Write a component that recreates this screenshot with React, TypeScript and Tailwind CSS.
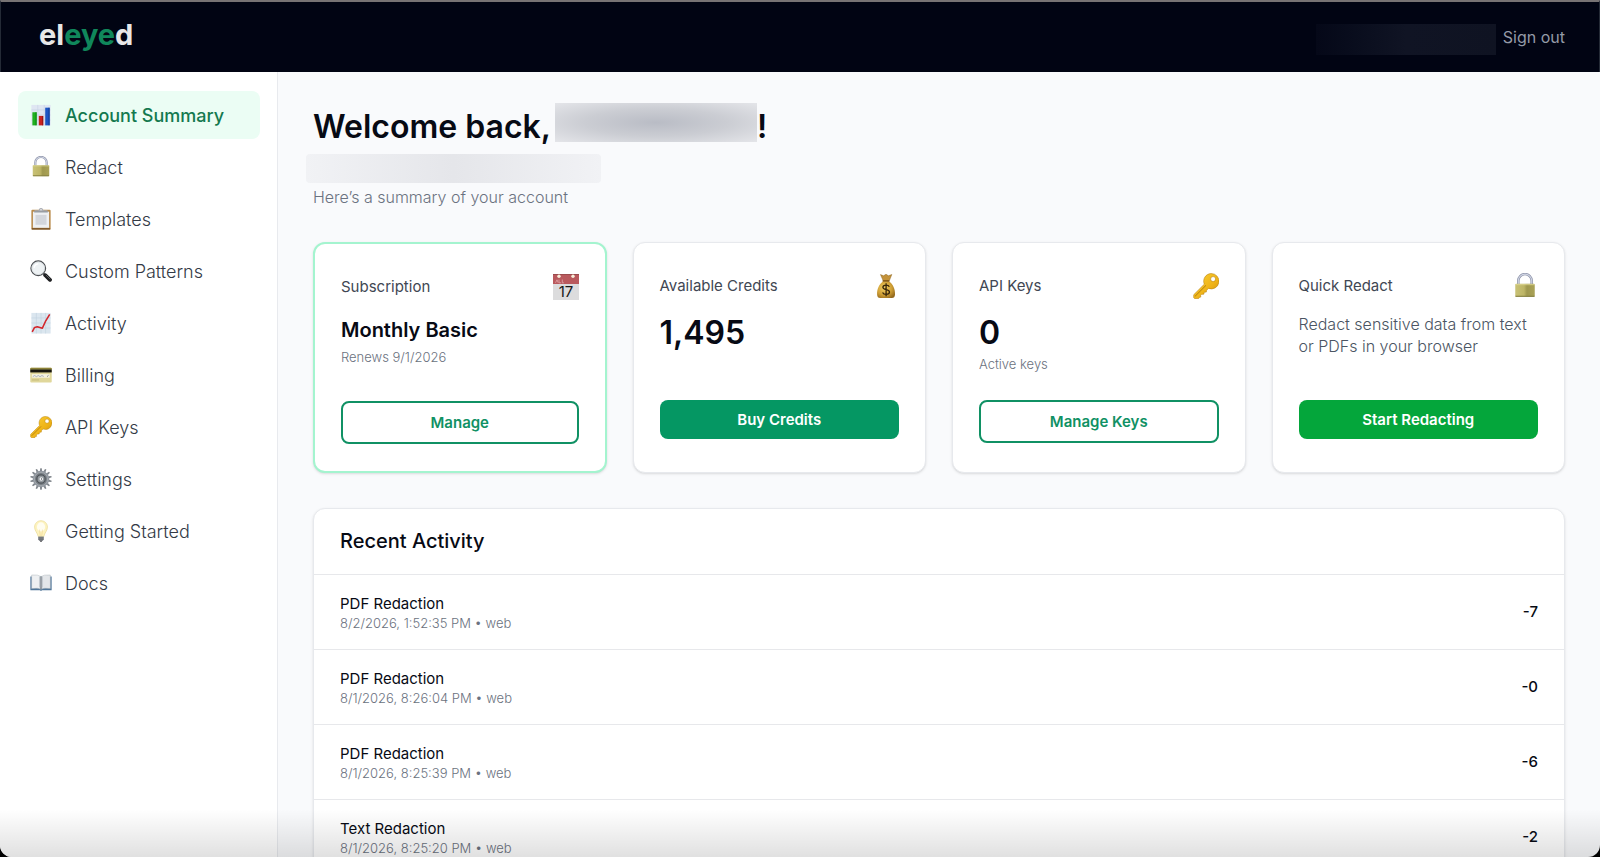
import type { ReactNode } from "react";

type IconProps = { className?: string };

function ChartIcon({ className }: IconProps) {
  return (
    <svg viewBox="0 0 24 24" className={className} aria-hidden="true">
      <rect x="1.5" y="1" width="21" height="22.5" fill="#dfe6f2" />
      <path d="M1.5 6.5h21M1.5 12h21M1.5 17.5h21M8.5 1v22.5M15.5 1v22.5" stroke="#c3cfe2" strokeWidth=".6" />
      <rect x="2.6" y="9" width="4.6" height="14.3" fill="#1fb01f" />
      <rect x="9.6" y="13" width="4.8" height="10.3" fill="#c9211e" />
      <rect x="16.6" y="4" width="4.8" height="19.3" fill="#1c55c4" />
      <path d="M6 9h1.2v14.3H6z" fill="#0d8a12" />
      <path d="M13.2 13h1.2v10.3h-1.2z" fill="#971513" />
      <path d="M20.2 4h1.2v19.3h-1.2z" fill="#113c98" />
    </svg>
  );
}

function LockIcon({ className }: IconProps) {
  return (
    <svg viewBox="0 0 24 24" className={className} aria-hidden="true">
      <defs>
        <linearGradient id="lock-body" x1="0" x2="1">
          <stop offset="0" stopColor="#c9c276" />
          <stop offset=".45" stopColor="#bdb566" />
          <stop offset=".6" stopColor="#9f984f" />
          <stop offset="1" stopColor="#aaa257" />
        </linearGradient>
      </defs>
      <path d="M5.800 10.500V7.200a6.200 6.200 0 0 1 12.400 0v3.300" fill="none" stroke="#8a90a6" strokeWidth="2.300" />
      <path d="M5.800 10.500V7.200a6.200 6.200 0 0 1 12.400 0v3.300" fill="none" stroke="#cfd4e3" strokeWidth="1.100" />
      <rect x="3" y="10" width="18" height="12" rx="1" fill="url(#lock-body)" />
      <path d="M3 10.800h18" stroke="#ded994" strokeWidth=".8" />
      <path d="M3.200 21.500h17.600" stroke="#858043" strokeWidth="1" />
    </svg>
  );
}

function ClipboardIcon({ className }: IconProps) {
  return (
    <svg viewBox="0 0 24 24" className={className} aria-hidden="true">
      <rect x="1.5" y="2" width="21" height="21.5" rx="1" fill="#b98b4b" />
      <path d="M2 22.8h20" stroke="#6f4a22" strokeWidth="1.4" />
      <rect x="3.2" y="4" width="17.6" height="17.6" fill="#eef0f3" />
      <path d="M6 7.5h12v10.8H6z" fill="#d3d6dc" />
      <path d="M4.600 4.600V3.200q0-.8 1-.8h3.200q.8 0 1-.8Q10.300 0 12 0t2.200 1.600q.2.800 1 .800h3.200q1 0 1 .8v1.400z" fill="#a9acb2" />
      <path d="M4.600 4.300h14.800" stroke="#7f838a" strokeWidth=".7" />
      <circle cx="12" cy="1.800" r=".8" fill="#f4f5f7" />
    </svg>
  );
}

function MagnifierIcon({ className }: IconProps) {
  return (
    <svg viewBox="0 0 24 24" className={className} aria-hidden="true">
      <path d="M14.800 14.800l2 2" stroke="#5b5e63" strokeWidth="2.200" />
      <path d="M16.600 16.600l5.200 5" stroke="#1e1f21" strokeWidth="4.200" strokeLinecap="round" />
      <path d="M17.600 16.600l4.200 4" stroke="#696c70" strokeWidth="1" strokeLinecap="round" />
      <circle cx="9" cy="9" r="8" fill="#eef2f4" stroke="#4b4e52" strokeWidth="1.300" />
      <circle cx="9" cy="9" r="6.900" fill="none" stroke="#cfd5d8" strokeWidth=".7" />
      <path d="M4.500 8a5 5 0 0 1 4-3.800" fill="none" stroke="#fff" strokeWidth="1.400" strokeLinecap="round" />
    </svg>
  );
}

function TrendIcon({ className }: IconProps) {
  return (
    <svg viewBox="0 0 24 24" className={className} aria-hidden="true">
      <rect x="1.500" y="1" width="21" height="22.500" fill="#dbe6ef" />
      <path d="M1.500 6.500h21M1.500 12h21M1.500 17.500h21M7 1v22.500M12 1v22.500M17 1v22.500" stroke="#c0d1de" strokeWidth=".6" />
      <path d="M2.400 21.800L5 16.800l3-.8 5.500 1.600 3.200-7L21.500 2.500" fill="none" stroke="#d3262b" strokeWidth="1.700" strokeLinejoin="round" />
    </svg>
  );
}

function CardIcon({ className }: IconProps) {
  return (
    <svg viewBox="0 0 24 24" className={className} aria-hidden="true">
      <rect x=".3" y="4" width="23.400" height="16.200" rx="1" fill="#e0d79b" />
      <path d="M.3 5q0-1 1-1h21.400q1 0 1 1v1.200H.3z" fill="#8d8338" />
      <rect x=".3" y="6" width="23.400" height="3.200" fill="#17160f" />
      <rect x="2" y="11" width="19.500" height="4" fill="#f5f2df" />
      <path d="M3 13.800l2-1.200 2 1.200 2-1.200 2 1.200 2-1.200 2 1" fill="none" stroke="#8f9bb5" strokeWidth=".8" />
      <path d="M18.600 13.800l1.600-1.400" stroke="#55606f" strokeWidth=".8" />
      <path d="M2 17.400h8" stroke="#b9ae6c" strokeWidth=".8" />
    </svg>
  );
}

function KeyIcon({ className }: IconProps) {
  return (
    <svg viewBox="0 0 24 24" className={className} aria-hidden="true">
      <defs>
        <linearGradient id="key-gold" x1="0" y1="0" x2="1" y2="1">
          <stop offset="0" stopColor="#fbd338" />
          <stop offset=".6" stopColor="#eeb217" />
          <stop offset="1" stopColor="#c98a0c" />
        </linearGradient>
      </defs>
      <path
        fillRule="evenodd"
        fill="url(#key-gold)"
        stroke="#b57f0e"
        strokeWidth=".5"
        d="M16.600.5a7.100 7.100 0 1 1-2.300 13.700l-1.700 1.700-.3 1.700-1.900.1-.4 1.900-1.900.1-1.100 1.100.2 1.400-1.500.4-.5 1-3.600.1-1-1L.7 20l9.700-9.700A7.100 7.100 0 0 1 16.600.5zm1.900 2.800a2.300 2.300 0 1 0 .1 4.600 2.300 2.300 0 0 0-.1-4.600z"
      />
      <path d="M1.800 21.600L12 11.400" stroke="#a8730a" strokeWidth=".8" />
    </svg>
  );
}

const gearTeeth = Array.from({ length: 14 }, (_, i) => (i * 360) / 14);

function GearIcon({ className }: IconProps) {
  return (
    <svg viewBox="0 0 24 24" className={className} aria-hidden="true">
      {gearTeeth.map((angle) => (
        <path key={angle} d="M10.700 3.800L11.200.2h1.600l.5 3.600z" fill="#80868c" transform={`rotate(${angle} 12 12)`} />
      ))}
      <circle cx="12" cy="12" r="9" fill="#9298a0" />
      <circle cx="12" cy="12" r="7" fill="#70767c" stroke="#b1b6bb" strokeWidth=".8" />
      <circle cx="12" cy="12" r="4.400" fill="#949a9f" stroke="#43484d" strokeWidth="1" />
      <circle cx="12.300" cy="12" r="2" fill="#f1f2f3" />
      <path d="M12 11v2l1.300-1z" fill="#43484d" />
    </svg>
  );
}

function BulbIcon({ className }: IconProps) {
  return (
    <svg viewBox="0 0 24 24" className={className} aria-hidden="true">
      <path
        d="M12 .8c4 0 7 3 7 6.900 0 4.300-3.300 6.300-3.900 10.300H8.900C8.300 14 5 12 5 7.700 5 3.800 8 .8 12 .8z"
        fill="#fdf3bf"
        stroke="#eadc98"
        strokeWidth=".8"
      />
      <ellipse cx="12" cy="7.500" rx="4.500" ry="5" fill="#fffdf0" />
      <path d="M10.400 10.500l.8 7.200M13.600 10.500l-.8 7.200" fill="none" stroke="#ecd08a" strokeWidth=".6" />
      <path d="M9 18h6v3.200l-1.300 1.600h-3.400L9 21.200z" fill="#8b8f94" />
      <path d="M9 19.500h6M9.200 21h5.600" stroke="#53575c" strokeWidth=".7" />
      <path d="M10.600 22.700h2.800l-.8 1h-1.200z" fill="#2d2f32" />
    </svg>
  );
}

function BookIcon({ className }: IconProps) {
  return (
    <svg viewBox="0 0 24 24" className={className} aria-hidden="true">
      <path d="M.4 4.800h23.200v15.200H13.200l-1.200.8-1.200-.8H.4z" fill="#4f7599" />
      <path d="M1.800 3.300Q9 2.600 12 5v13.800Q9 17 1.800 18.100z" fill="#eef0f2" stroke="#a9b1b9" strokeWidth=".5" />
      <path d="M22.200 3.300Q15 2.600 12 5v13.800q3-1.800 10.200-.7z" fill="#e3e6e9" stroke="#a9b1b9" strokeWidth=".5" />
      <path d="M12 5v13.800" stroke="#4d5660" strokeWidth="1" />
      <path d="M10.400 5v12M13.600 5v12" stroke="#c6ccd2" strokeWidth="1.200" />
    </svg>
  );
}

function CalendarIcon({ className }: IconProps) {
  return (
    <svg viewBox="0 0 26 26" className={className} aria-hidden="true">
      <rect width="26" height="26" fill="#dcdcdd" />
      <rect width="26" height="10" fill="#b9595d" />
      <path d="M0 .4h26" stroke="#8f4548" strokeWidth=".8" />
      <path d="M2.500 8.800l1.500-3 1.200 3M6 5.500v3.300h2M9.300 5.500v3.300h1.600" fill="none" stroke="#dfa5a7" strokeWidth=".8" />
      <circle cx="6" cy="2.200" r="1.700" fill="#f8eeda" />
      <circle cx="20" cy="2.200" r="1.700" fill="#f8eeda" />
      <text x="13" y="23.200" textAnchor="middle" className="font-[Inter] text-[15px] font-normal" fill="#171717">
        17
      </text>
    </svg>
  );
}

function MoneyBagIcon({ className }: IconProps) {
  return (
    <svg viewBox="0 0 26 26" className={className} aria-hidden="true">
      <defs>
        <radialGradient id="bag-fill" cx=".4" cy=".4" r=".7">
          <stop offset="0" stopColor="#f1cd62" />
          <stop offset=".6" stopColor="#cf9f35" />
          <stop offset="1" stopColor="#94691d" />
        </radialGradient>
      </defs>
      <path d="M7.500 1.600l3 1.200L13 1.300l2.500 1.500 3.300-1.300-2.400 6h-6.300z" fill="#c4933a" stroke="#8d651f" strokeWidth=".5" />
      <path d="M10.200 8.300h5.800c4 3 6.300 8 6 13.200-.1 2.500-1.200 3.500-3 3.500H7.200c-1.900 0-3-1-3.100-3.500-.3-5.200 2-10.200 6.100-13.200z" fill="url(#bag-fill)" />
      <rect x="9.500" y="6.900" width="7" height="1.900" rx=".9" fill="#8a5e18" />
      <path
        d="M16.300 13.800c-.5-1.200-1.700-1.700-3.200-1.700-1.800 0-3.200.8-3.200 2.200 0 3.200 6.600 1.500 6.600 4.700 0 1.500-1.500 2.400-3.400 2.400-1.700 0-3-.7-3.500-2M13.100 10.300v12.900"
        fill="none"
        stroke="#37260a"
        strokeWidth="1.300"
      />
    </svg>
  );
}

const navItems = [
  { label: "Account Summary", Icon: ChartIcon, active: true },
  { label: "Redact", Icon: LockIcon },
  { label: "Templates", Icon: ClipboardIcon },
  { label: "Custom Patterns", Icon: MagnifierIcon },
  { label: "Activity", Icon: TrendIcon },
  { label: "Billing", Icon: CardIcon },
  { label: "API Keys", Icon: KeyIcon },
  { label: "Settings", Icon: GearIcon },
  { label: "Getting Started", Icon: BulbIcon },
  { label: "Docs", Icon: BookIcon },
];

const activity = [
  { title: "PDF Redaction", meta: "8/2/2026, 1:52:35 PM • web", amount: "-7" },
  { title: "PDF Redaction", meta: "8/1/2026, 8:26:04 PM • web", amount: "-0" },
  { title: "PDF Redaction", meta: "8/1/2026, 8:25:39 PM • web", amount: "-6" },
  { title: "Text Redaction", meta: "8/1/2026, 8:25:20 PM • web", amount: "-2" },
];

type CardProps = {
  label: string;
  Icon: (props: IconProps) => ReactNode;
  action: string;
  buttonClass: string;
  highlighted?: boolean;
  children: ReactNode;
};

const outlineButton = "border-2 border-[#109164] bg-white text-[#109164]";

function SummaryCard({ label, Icon, action, buttonClass, highlighted, children }: CardProps) {
  return (
    <section
      className={`rounded-xl bg-white px-[26px] pt-[26px] pb-[27px] shadow-sm ${
        highlighted ? "border-2 border-[#a4f4cf]" : "border border-[#e7e9ed]"
      }`}
    >
      <div className="flex h-[34px] items-center justify-between">
        <h2 className="text-[15px] text-[#414753]">{label}</h2>
        <Icon className="size-[26px]" />
      </div>
      <div className="min-h-[97px] pt-[10px]">{children}</div>
      <button className={`w-full rounded-lg px-4 py-2 text-[15px] leading-[23px] font-semibold ${buttonClass}`}>
        {action}
      </button>
    </section>
  );
}

export default function App() {
  return (
    <div className="h-dvh bg-black font-[Inter,sans-serif] text-[#070a14]">
      <div className="relative flex h-full flex-col overflow-hidden rounded-b-xl bg-[#f9fafc]">
        <header className="flex h-[72px] shrink-0 items-center justify-between border-x border-t-2 border-x-[#242a36] border-t-[#777374] bg-[#010413] pr-[34px] pl-[38px]">
          <a href="#" className="pb-1 text-[29px] leading-9 font-bold text-[#e8e8e8]">
            el<span className="text-[#10875b]">eye</span>d
          </a>
          <div className="flex items-center gap-[7px]">
            <div className="mt-1 h-[31px] w-[180px] bg-linear-to-r from-[#050818] via-[#101424] to-[#0f1322]" />
            <button className="text-[16px] text-[#949aa7]">Sign out</button>
          </div>
        </header>

        <div className="flex min-h-0 flex-1">
          <nav className="w-[278px] shrink-0 border-r border-[#e8eaee] bg-white pt-[19px] pr-[17px] pl-[18px]">
            <ul className="flex flex-col gap-1">
              {navItems.map(({ label, Icon, active }) => (
                <li key={label}>
                  <a
                    href="#"
                    className={`flex h-12 items-center gap-[13px] rounded-lg px-3 text-[18px] ${
                      active ? "bg-[#ebfdf4] font-medium text-[#14794f]" : "font-light text-[#333a46]"
                    }`}
                  >
                    <Icon className="size-[22px]" />
                    {label}
                  </a>
                </li>
              ))}
            </ul>
          </nav>

          <main className="min-w-0 flex-1 overflow-y-auto px-[35px] pt-[31px] [scrollbar-width:none]">
            <h1 className="flex h-12 items-center text-[32px] font-semibold">
              Welcome back,
              <span className="ml-1 h-[39px] w-[202px] self-start bg-[radial-gradient(ellipse_at_center,#b9bcc5_0%,#cbcdd3_50%,#e4e5e9_100%)]" />!
            </h1>
            <div className="mt-[3px] -ml-[7px] h-[29px] w-[295px] rounded-sm bg-linear-to-r from-[#f1f2f5] via-[#e5e6ea] to-[#f1f2f5]" />
            <p className="mt-[2px] text-[16px] leading-6 font-light text-[#6b7280]">Here’s a summary of your account</p>

            <div className="mt-[33px] grid grid-cols-4 gap-[26px]">
              <SummaryCard label="Subscription" Icon={CalendarIcon} action="Manage" buttonClass={outlineButton} highlighted>
                <p className="text-[20px] leading-8 font-semibold">Monthly Basic</p>
                <p className="mt-px text-[13px] leading-5 font-light text-[#6b7280]">Renews 9/1/2026</p>
              </SummaryCard>
              <SummaryCard label="Available Credits" Icon={MoneyBagIcon} action="Buy Credits" buttonClass="bg-[#059763] text-white">
                <p className="text-[32px] leading-10 font-semibold">1,495</p>
              </SummaryCard>
              <SummaryCard label="API Keys" Icon={KeyIcon} action="Manage Keys" buttonClass={outlineButton}>
                <p className="text-[32px] leading-10 font-semibold">0</p>
                <p className="mt-px text-[13px] leading-5 font-light text-[#6b7280]">Active keys</p>
              </SummaryCard>
              <SummaryCard label="Quick Redact" Icon={LockIcon} action="Start Redacting" buttonClass="bg-[#04a63b] text-white">
                <p className="text-[16px] leading-[22px] font-light text-[#4b5563]">Redact sensitive data from text or PDFs in your browser</p>
              </SummaryCard>
            </div>

            <section className="mt-[35px] rounded-xl border border-[#e7e9ed] bg-white shadow-sm">
              <h2 className="px-[26px] py-[18px] text-[20px] leading-[29px] font-medium">Recent Activity</h2>
              <ul>
                {activity.map((item) => (
                  <li key={item.meta} className="flex items-center justify-between border-t border-[#e7e8eb] px-[26px] py-[18px]">
                    <div>
                      <p className="text-[15px] leading-[22px]">{item.title}</p>
                      <p className="text-[13px] leading-4 font-light text-[#6b7280]">{item.meta}</p>
                    </div>
                    <span className="text-[15px] font-medium">{item.amount}</span>
                  </li>
                ))}
              </ul>
            </section>
          </main>
        </div>
        <div className="pointer-events-none absolute inset-x-0 bottom-0 h-12 bg-linear-to-b from-transparent to-black/12" />
      </div>
    </div>
  );
}
